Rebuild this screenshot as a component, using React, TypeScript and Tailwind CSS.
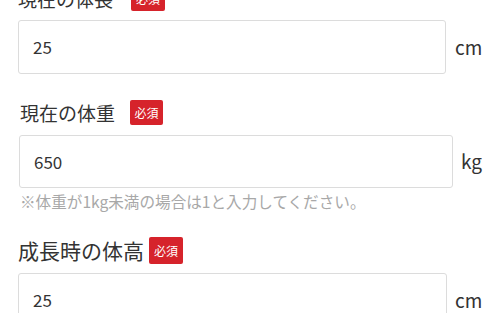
import React from "react";

const font = { fontFamily: '"Noto Sans CJK JP", "Noto Sans", sans-serif' };

function Badge({ className = "" }: { className?: string }) {
  return (
    <span
      className={`inline-flex items-center justify-center bg-[#d6232b] text-white text-[12px] leading-none rounded-[2px] ${className}`}
    >
      必須
    </span>
  );
}

export default function App() {
  return (
    <div className="w-[500px] h-[313px] overflow-hidden bg-white text-[#333]" style={font}>
      {/* Section 1 */}
      <div className="-mt-[14px]">
        <div className="flex items-center pl-[18px] h-[25px]">
          <span className="text-[19px] leading-none">現在の体長</span>
          <Badge className="ml-[18px] w-[34px] h-[25px]" />
        </div>
        <div className="flex items-center mt-[9px] pl-[18px]">
          <div className="w-[428px] h-[54px] border border-[#dcdcdc] rounded-[3px] flex items-center pl-[14px] text-[17px]">
            25
          </div>
          <span className="ml-[9px] text-[19px]">cm</span>
        </div>
      </div>

      {/* Section 2 */}
      <div className="mt-[26px]">
        <div className="flex items-center pl-[20px] h-[25px]">
          <span className="text-[19px] leading-none">現在の体重</span>
          <Badge className="ml-[15px] w-[33px] h-[25px]" />
        </div>
        <div className="flex items-center mt-[10px] pl-[19px]">
          <div className="w-[434px] h-[53px] border border-[#dcdcdc] rounded-[3px] flex items-center pl-[14px] text-[17px]">
            650
          </div>
          <span className="ml-[8px] text-[19px]">kg</span>
        </div>
        <div className="pl-[20px] mt-[4px] text-[15.6px] leading-[18px] text-[#a8a8a8] whitespace-nowrap">
          ※体重が1kg未満の場合は1と入力してください。
        </div>
      </div>

      {/* Section 3 */}
      <div className="mt-[27px]">
        <div className="flex items-center pl-[18px] h-[27px]">
          <span className="text-[21px] leading-none">成長時の体高</span>
          <Badge className="ml-[5px] w-[34px] h-[27px]" />
        </div>
        <div className="flex items-center mt-[9px] pl-[18px]">
          <div className="w-[429px] h-[54px] border border-[#dcdcdc] rounded-[3px] flex items-center pl-[14px] text-[17px]">
            25
          </div>
          <span className="ml-[8px] text-[19px]">cm</span>
        </div>
      </div>
    </div>
  );
}
